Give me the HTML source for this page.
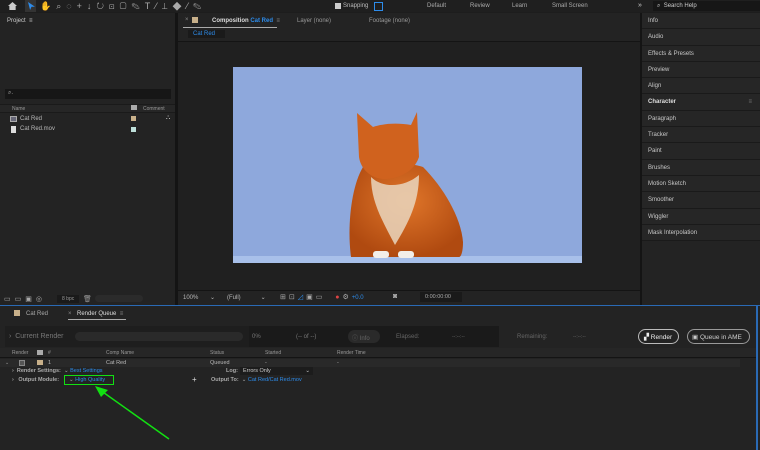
<!DOCTYPE html>
<html><head><meta charset="utf-8"><style>
*{margin:0;padding:0;box-sizing:border-box}
body{width:760px;height:450px;background:#1d1d1d;font-family:"Liberation Sans",sans-serif;font-size:6px;color:#b8b8b8;position:relative;overflow:hidden}
.a{position:absolute;white-space:nowrap}
.blue{color:#2d8ceb}
.rp div{height:16.3px;border-bottom:1px solid #1a1a1a;padding:5px 0 0 6px;color:#c8c8c8;font-size:6px;background:#262626}
</style></head><body>
<div class="a" style="left:0;top:0;width:760px;height:12px;background:#1f1f1f"></div>
<div class="a" style="left:8px;top:2px;width:9px;height:8px;background:#ccc;clip-path:polygon(50% 0,100% 50%,85% 50%,85% 100%,15% 100%,15% 50%,0 50%)"></div>
<div class="a" style="left:25px;top:0;width:11px;height:12px;background:#333"></div>
<div class="a" style="left:28px;top:2px;width:7px;height:8px;background:#2d8ceb;clip-path:polygon(0 0,100% 60%,50% 60%,30% 100%)"></div>
<div class="a" style="left:40px;top:1px;color:#aaa;font-size:9px;letter-spacing:5px;line-height:10px">✋⌕◌+↓↻⊡▢✎T⁄⊥◆⁄✎</div>
<div class="a" style="left:335px;top:3px;width:6px;height:6px;background:#ccc"></div>
<div class="a" style="left:343px;top:3px;font-size:6px;color:#bbb">Snapping</div>
<div class="a" style="left:374px;top:2px;width:9px;height:9px;border:1px solid #2d8ceb"></div>
<div class="a" style="left:427px;top:3px;color:#aaa">Default</div>
<div class="a" style="left:470px;top:3px;color:#aaa">Review</div>
<div class="a" style="left:512px;top:3px;color:#aaa">Learn</div>
<div class="a" style="left:552px;top:3px;color:#aaa">Small Screen</div>
<div class="a" style="left:638px;top:2px;color:#ccc;font-size:7px">»</div>
<div class="a" style="left:653px;top:1px;width:107px;height:10px;background:#161616"></div>
<div class="a" style="left:657px;top:3px;color:#ccc">⌕ &nbsp;Search Help</div>
<div class="a" style="left:0;top:13px;width:175px;height:292px;background:#232323"></div>
<div class="a" style="left:7px;top:18px;color:#ccc">Project &nbsp;≡</div>
<div class="a" style="left:5px;top:89px;width:166px;height:10px;background:#161616"></div>
<div class="a" style="left:8px;top:90px;color:#aaa">⌕.</div>
<div class="a" style="left:0;top:104px;width:175px;height:9px;background:#262626;border-top:1px solid #1a1a1a;border-bottom:1px solid #1a1a1a"></div>
<div class="a" style="left:12px;top:106px;font-size:5px;color:#999">Name</div>
<div class="a" style="left:131px;top:105px;width:6px;height:5px;background:#aaa"></div>
<div class="a" style="left:143px;top:106px;font-size:5px;color:#999">Comment</div>
<div class="a" style="left:10px;top:116px;width:7px;height:6px;background:#667;border:1px solid #aaa"></div>
<div class="a" style="left:20px;top:116px">Cat Red</div>
<div class="a" style="left:131px;top:116px;width:5px;height:5px;background:#c8b08a"></div>
<div class="a" style="left:166px;top:115px;color:#ccc">⛬</div>
<div class="a" style="left:11px;top:126px;width:5px;height:7px;background:#ddd"></div>
<div class="a" style="left:20px;top:126px">Cat Red.mov</div>
<div class="a" style="left:131px;top:127px;width:5px;height:5px;background:#bfe0da"></div>
<div class="a" style="left:0;top:293px;width:165px;height:12px;background:#232323"></div>
<div class="a" style="left:4px;top:295px;color:#aaa;font-size:7px;letter-spacing:4px">▭▭▣◎</div>
<div class="a" style="left:57px;top:295px;width:22px;height:8px;background:#1a1a1a;font-size:5px;color:#999;padding:1px 5px">8 bpc</div>
<div class="a" style="left:83px;top:295px;color:#999;font-size:7px">🗑</div>
<div class="a" style="left:95px;top:295px;width:48px;height:7px;background:#2b2b2b;border-radius:4px"></div>
<div class="a" style="left:175px;top:13px;width:3px;height:292px;background:#141414"></div>
<div class="a" style="left:178px;top:13px;width:462px;height:292px;background:#232323"></div>
<div class="a" style="left:185px;top:17px;color:#888">×</div>
<div class="a" style="left:192px;top:17px;width:6px;height:6px;background:#c8b08a"></div>
<div class="a" style="left:212px;top:18px;color:#ddd;font-weight:bold">Composition <span class="blue">Cat Red</span> &nbsp;<span style="color:#888">≡</span></div>
<div class="a" style="left:183px;top:27px;width:94px;height:1px;background:#aaa"></div>
<div class="a" style="left:297px;top:18px;color:#999">Layer (none)</div>
<div class="a" style="left:369px;top:18px;color:#999">Footage (none)</div>
<div class="a" style="left:188px;top:30px;width:37px;height:8px;background:#1a1a1a"></div>
<div class="a" style="left:193px;top:31px"><span class="blue">Cat Red</span></div>
<div class="a" style="left:178px;top:41px;width:462px;height:1px;background:#141414"></div>
<div class="a" style="left:178px;top:42px;width:462px;height:248px;background:#202020"></div>
<svg class="a" style="left:233px;top:67px" width="349" height="196" viewBox="0 0 349 196">
<defs><radialGradient id="g" cx="50%" cy="40%" r="60%"><stop offset="0" stop-color="#e0762a"/><stop offset="1" stop-color="#b04a10"/></radialGradient></defs>
<rect width="349" height="196" fill="#8ea8dc"/>
<rect y="189" width="349" height="7" fill="#a8c0ea"/>
<path d="M118 190 C114 160 118 120 130 100 C150 95 175 95 190 100 C210 120 228 150 230 175 C230 185 228 190 226 190 Z" fill="url(#g)"/>
<path d="M126 90 L124 46 L140 60 C152 56 166 56 178 58 L184 45 L186 90 C180 108 160 112 152 112 C140 112 128 104 126 90 Z" fill="#d0621e"/>
<path d="M138 110 C150 122 172 120 186 108 C186 135 176 155 162 178 C150 155 138 135 138 110 Z" fill="#e9d6be" opacity=".85"/>
<rect x="140" y="184" width="16" height="7" rx="3" fill="#f2eee8"/>
<rect x="165" y="184" width="16" height="7" rx="3" fill="#f2eee8"/>
</svg>
<div class="a" style="left:178px;top:290px;width:462px;height:15px;background:#232323;border-top:1px solid #141414"></div>
<div class="a" style="left:183px;top:294px">100% &nbsp;&nbsp;&nbsp;&nbsp;&nbsp;&nbsp;⌄</div>
<div class="a" style="left:227px;top:294px">(Full) &nbsp;&nbsp;&nbsp;&nbsp;&nbsp;&nbsp;&nbsp;&nbsp;&nbsp;&nbsp;&nbsp;⌄</div>
<div class="a" style="left:280px;top:293px;color:#aaa;font-size:7px;letter-spacing:3px">⊞⊡<span class="blue">◿</span>▣▭ &nbsp;<span style="color:#d44">●</span>⚙<span class="blue" style="font-size:6px;letter-spacing:0">+0.0</span></div>
<div class="a" style="left:393px;top:293px;color:#aaa;font-size:7px">◙</div>
<div class="a" style="left:420px;top:292px;width:42px;height:10px;background:#1a1a1a;color:#aaa;padding:2px 5px;font-size:5.5px">0:00:00:00</div>
<div class="a" style="left:640px;top:13px;width:2px;height:292px;background:#141414"></div>
<div class="a rp" style="left:642px;top:13px;width:118px;height:292px;background:#232323">
<div>Info</div><div>Audio</div><div>Effects &amp; Presets</div><div>Preview</div><div>Align</div><div style="color:#ddd;font-weight:bold">Character <span style="float:right;margin-right:8px;color:#777">≡</span></div><div>Paragraph</div><div>Tracker</div><div>Paint</div><div>Brushes</div><div>Motion Sketch</div><div>Smoother</div><div>Wiggler</div><div>Mask Interpolation</div>
</div>
<div class="a" style="left:0;top:305px;width:760px;height:145px;background:#232323;border-top:1px solid #2a6ab5"></div>
<div class="a" style="left:14px;top:310px;width:6px;height:6px;background:#c8b08a"></div>
<div class="a" style="left:26px;top:311px;color:#aaa">Cat Red</div>
<div class="a" style="left:68px;top:311px;color:#888">×</div>
<div class="a" style="left:77px;top:311px;color:#ddd">Render Queue &nbsp;<span style="color:#888">≡</span></div>
<div class="a" style="left:68px;top:319px;width:58px;height:1px;background:#aaa"></div>
<div class="a" style="left:5px;top:326px;width:244px;height:21px;background:#1e1e1e"></div>
<div class="a" style="left:249px;top:326px;width:250px;height:21px;background:#1a1a1a"></div>
<div class="a" style="left:9px;top:333px;color:#777;font-size:7px">›&nbsp; Current Render</div>
<div class="a" style="left:75px;top:332px;width:168px;height:9px;background:#2a2a2a;border-radius:5px"></div>
<div class="a" style="left:252px;top:334px;color:#777;font-size:6px">0%</div>
<div class="a" style="left:296px;top:334px;color:#777;font-size:6px">(-- of --)</div>
<div class="a" style="left:348px;top:330px;width:32px;height:13px;background:#2a2a2a;border-radius:7px;color:#666;padding:3px 4px;font-size:6px">ⓘ Info</div>
<div class="a" style="left:396px;top:334px;color:#666;font-size:6px">Elapsed:</div>
<div class="a" style="left:452px;top:334px;color:#666;font-size:5px">--:--:--</div>
<div class="a" style="left:517px;top:334px;color:#666;font-size:6px">Remaining:</div>
<div class="a" style="left:573px;top:334px;color:#666;font-size:5px">--:--:--</div>
<div class="a" style="left:638px;top:329px;width:41px;height:15px;border:1px solid #bbb;border-radius:8px;color:#eee;padding:3px 0 0 5px;font-size:6.5px">▞ Render</div>
<div class="a" style="left:687px;top:329px;width:63px;height:15px;border:1px solid #999;border-radius:8px;color:#ccc;padding:3px 0 0 4px;font-size:6.5px">▣ Queue in AME</div>
<div class="a" style="left:0;top:348px;width:758px;height:10px;background:#262626;border-bottom:1px solid #141414"></div>
<div class="a" style="left:12px;top:350px;font-size:5px;color:#999">Render</div>
<div class="a" style="left:37px;top:350px;width:6px;height:5px;background:#aaa"></div>
<div class="a" style="left:48px;top:350px;font-size:5px;color:#999">#</div>
<div class="a" style="left:106px;top:350px;font-size:5px;color:#999">Comp Name</div>
<div class="a" style="left:210px;top:350px;font-size:5px;color:#999">Status</div>
<div class="a" style="left:265px;top:350px;font-size:5px;color:#999">Started</div>
<div class="a" style="left:337px;top:350px;font-size:5px;color:#999">Render Time</div>
<div class="a" style="left:0;top:359px;width:740px;height:8px;background:#292929"></div>
<div class="a" style="left:5px;top:360px;color:#999;font-size:5px">⌄</div>
<div class="a" style="left:19px;top:360px;width:6px;height:6px;border:1px solid #888;background:#555"></div>
<div class="a" style="left:37px;top:360px;width:6px;height:5px;background:#c8b08a"></div>
<div class="a" style="left:48px;top:360px;font-size:5.5px">1</div>
<div class="a" style="left:106px;top:360px;font-size:5.5px">Cat Red</div>
<div class="a" style="left:210px;top:360px;font-size:5.5px">Queued</div>
<div class="a" style="left:265px;top:360px;font-size:5.5px">-</div>
<div class="a" style="left:337px;top:360px;font-size:5.5px">-</div>
<div class="a" style="left:12px;top:368px;font-size:5.5px;font-weight:bold;color:#aaa">› &nbsp;Render Settings: &nbsp;<span style="color:#aaa;font-weight:normal">⌄</span> <span class="blue" style="font-weight:normal">Best Settings</span></div>
<div class="a" style="left:226px;top:368px;font-size:5.5px;font-weight:bold;color:#aaa">Log:</div>
<div class="a" style="left:240px;top:367px;width:73px;height:8px;background:#1c1c1c;font-size:5.5px;color:#ccc;padding:1px 3px">Errors Only <span style="float:right">⌄</span></div>
<div class="a" style="left:12px;top:377px;font-size:5.5px;font-weight:bold;color:#aaa">› &nbsp;&nbsp;Output Module:</div>
<div class="a" style="left:64px;top:375px;width:50px;height:10px;border:1.5px solid #12e012"></div>
<div class="a" style="left:69px;top:377px;font-size:5.5px;color:#aaa">⌄ <span class="blue">High Quality</span></div>
<div class="a" style="left:192px;top:375px;font-size:8px;color:#ddd">+</div>
<div class="a" style="left:211px;top:377px;font-size:5.5px;font-weight:bold;color:#aaa">Output To: &nbsp;<span style="font-weight:normal">⌄</span> <span class="blue" style="font-weight:normal">Cat Red/Cat Red.mov</span></div>
<div class="a" style="left:756px;top:305px;width:2px;height:145px;background:#2a6ab5"></div>
<svg class="a" style="left:90px;top:385px" width="85" height="60"><line x1="79" y1="54" x2="10" y2="5" stroke="#12e012" stroke-width="1.5"/><polygon points="5,1 18,5 11,12" fill="#12e012"/></svg>
</body></html>
